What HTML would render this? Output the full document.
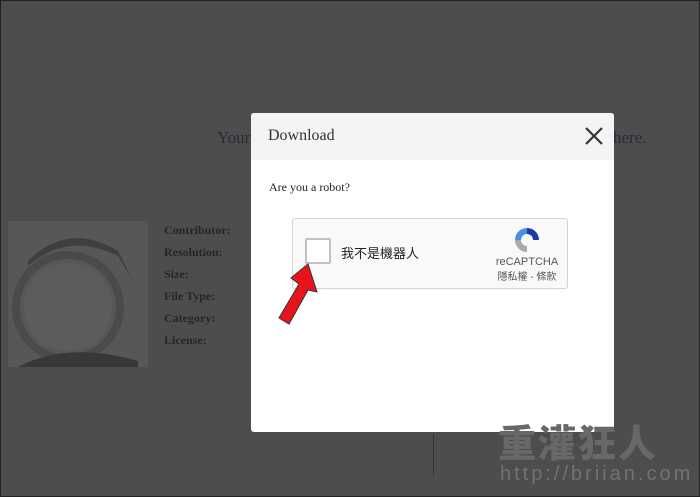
<!DOCTYPE html>
<html><head><meta charset="utf-8"><style>
html,body{margin:0;padding:0}
body{width:700px;height:497px;overflow:hidden;position:relative;background:#4d4d4d;font-family:"Liberation Serif",serif}
.frame{position:absolute;inset:0;border:1px solid #222;box-sizing:border-box}
.bgt{position:absolute;font-size:17px;color:#2a2a3a}
.lbl{position:absolute;left:164px;font-size:12px;font-weight:bold;color:#262626}
.img{position:absolute;left:8px;top:221px;width:140px;height:146px;background:#575757}
.modal{position:absolute;left:251px;top:113px;width:363px;height:319px;background:#fff;border-radius:3px;overflow:hidden}
.hd{height:47px;background:#f4f4f4;position:relative}
.hd span{position:absolute;left:17px;top:14px;font-size:16px;color:#333}
.x{position:absolute;right:8px;top:11px}
.q{position:absolute;left:18px;top:67px;font-size:12px;color:#222}
.rc{position:absolute;left:41px;top:105px;width:274px;height:69px;background:#f9f9f9;border:1px solid #d3d3d3;border-radius:3px;font-family:"Liberation Sans","Noto Sans CJK TC",sans-serif}
.cb{position:absolute;left:12px;top:19px;width:22px;height:22px;border:2px solid #c1c1c1;border-radius:2px;background:#fff}
.t{position:absolute;left:48px;top:24px;font-size:13px;color:#222}
.logo{position:absolute;right:2px;top:6px;width:76px;text-align:center;font-size:11px;color:#555}
.wm{position:absolute;left:498px;top:420px;font-family:"Noto Sans CJK TC",sans-serif;font-weight:900;font-size:38px;color:#686868;letter-spacing:2px;line-height:42px}
.wm2{position:absolute;left:500px;top:463px;font-family:"Liberation Sans",sans-serif;font-size:20px;color:#727272;letter-spacing:3px}
</style></head><body>
<div class="bgt" style="left:217px;top:128px">Your</div>
<div class="bgt" style="left:613px;top:128px">here.</div>
<div class="img"><svg width="140" height="146"><circle cx="60" cy="86" r="52" fill="none" stroke="#4a4a4a" stroke-width="8"/><circle cx="60" cy="86" r="44" fill="#5c5c5c"/><path d="M20 40 Q60 0 110 30 L125 60 L110 35 Q60 10 20 45Z" fill="#3f3f3f"/><path d="M10 146 Q60 120 130 140 L130 146Z" fill="#383838"/></svg></div>
<div class="lbl" style="top:223px">Contributor:</div>
<div class="lbl" style="top:245px">Resolution:</div>
<div class="lbl" style="top:267px">Size:</div>
<div class="lbl" style="top:289px">File Type:</div>
<div class="lbl" style="top:311px">Category:</div>
<div class="lbl" style="top:333px">License:</div>
<div style="position:absolute;left:433px;top:434px;width:1px;height:42px;background:#333"></div>
<div class="modal">
<div class="hd"><span>Download</span><svg class="x" width="24" height="24"><path d="M4 4L20 20M20 4L4 20" stroke="#333" stroke-width="2.2"/></svg></div>
<div class="q">Are you a robot?</div>
<div class="rc"><div class="cb"></div><div class="t">我不是機器人</div>
<div class="logo"><svg width="30" height="30" viewBox="0 0 30 30"><path d="M15 3A12 12 0 0 1 27 15H21A6 6 0 0 0 15 9Z" fill="#1c3aa9"/><path d="M3 15A12 12 0 0 1 15 3V9A6 6 0 0 0 9 15Z" fill="#4a90e2"/><path d="M15 27A12 12 0 0 1 3 15H9A6 6 0 0 0 15 21Z" fill="#aaa"/></svg><div style="margin-top:-2px">reCAPTCHA</div><div style="font-size:10px">隱私權 - 條款</div></div></div>
</div>
<svg style="position:absolute;left:275px;top:262px" width="45" height="65"><path d="M33 2 L42 30 L33 28 L14 62 L4 56 L24 22 L16 16Z" fill="#e8141c" stroke="#333" stroke-width="1"/></svg>
<div class="wm">重灌狂人</div>
<div class="wm2">http://briian.com</div>
<div class="frame"></div>
</body></html>
